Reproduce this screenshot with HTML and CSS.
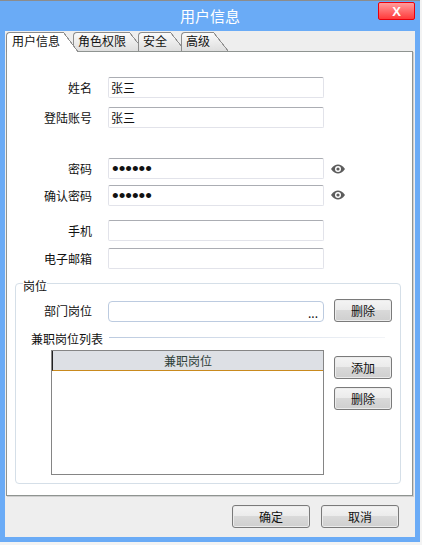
FILE: index.html
```html
<!DOCTYPE html>
<html lang="zh-CN">
<head>
    <meta charset="UTF-8">
    <meta name="viewport" content="width=device-width, initial-scale=1.0">
    <title>用户信息</title>
    <link rel="stylesheet" href="styles.css">
</head>
<body>
    <div class="window">
        <div class="titlebar">
            <span></span>
            <span class="title">用户信息</span>
            <button class="close">X</button>
        </div>

        <div class="client">
            <div class="tabs">
                <div class="tab first active">用户信息</div>
                <div class="tab">角色权限</div>
                <div class="tab tab-safe">安全</div>
                <div class="tab tab-high">高级</div>
            </div>

            <div class="pane">
                <div class="row">
                    <label>姓名</label>
                    <input type="text" value="张三">
                </div>
                <div class="row gap-9">
                    <label>登陆账号</label>
                    <input type="text" value="张三">
                </div>
                <div class="row gap-30">
                    <label>密码</label>
                    <input class="pwd" type="password" value="123456">
                    <svg class="eye" viewBox="0 0 14 10"><path d="M0 5C2.5 1.6 4.7 .5 7 .5S11.500 1.600 14 5C11.500 8.400 9.300 9.500 7 9.500S2.500 8.400 0 5Z" fill="#5c5c5c"/><circle cx="7" cy="5" r="3" fill="#fff"/><circle cx="7" cy="5" r="1.600" fill="#5c5c5c"/></svg>
                </div>
                <div class="row gap-6">
                    <label>确认密码</label>
                    <input class="pwd" type="password" value="123456">
                    <svg class="eye" viewBox="0 0 14 10"><path d="M0 5C2.5 1.6 4.7 .5 7 .5S11.500 1.600 14 5C11.500 8.400 9.300 9.500 7 9.500S2.500 8.400 0 5Z" fill="#5c5c5c"/><circle cx="7" cy="5" r="3" fill="#fff"/><circle cx="7" cy="5" r="1.600" fill="#5c5c5c"/></svg>
                </div>
                <div class="row gap-14">
                    <label>手机</label>
                    <input type="text">
                </div>
                <div class="row gap-7">
                    <label>电子邮箱</label>
                    <input type="text">
                </div>

                <fieldset class="group">
                    <legend>岗位</legend>

                    <div class="dept">
                        <label>部门岗位</label>
                        <div class="picker">...</div>
                        <button class="btn">删除</button>
                    </div>

                    <div class="subhead">
                        <span>兼职岗位列表</span>
                        <div class="rule"></div>
                    </div>

                    <div class="list-row">
                        <div class="list">
                            <div class="list-head">兼职岗位</div>
                        </div>
                        <div class="list-btns">
                            <button class="btn">添加</button>
                            <button class="btn">删除</button>
                        </div>
                    </div>
                </fieldset>
            </div>

            <div class="footer">
                <button class="btn wide">确定</button>
                <button class="btn wide">取消</button>
            </div>
        </div>
    </div>
</body>
</html>
```

FILE: styles.css
```css
* {
    box-sizing: border-box;
}
body {
    margin: 0;
    background: #f3f3f3;
    font-family: "Noto Sans CJK SC", "Liberation Sans", sans-serif;
    font-size: 12px;
    color: #111;
}
.window {
    width: 420px;
    height: 542px;
    border-top: 1px solid #8c8c8c;
    background: #6aabf6;
}
.titlebar {
    display: grid;
    grid-template-columns: 1fr auto 1fr;
    height: 30px;
}
.title {
    color: #fff;
    font-size: 15px;
    line-height: 30px;
    letter-spacing: 0;
}
.close {
    justify-self: end;
    width: 37px;
    height: 18px;
    margin: 1px 5px 0 0;
    padding: 0;
    border: 1px solid #e8000c;
    border-radius: 2px;
    background: linear-gradient(#ff9c9c, #ff3a3a);
    color: #fff;
    font: bold 13px/15px "Liberation Sans", sans-serif;
}

.client {
    width: 410px;
    height: 506px;
    margin-left: 5px;
    padding: 1px 0 0 1px;
    background: #eeeeee;
}

.tabs {
    display: flex;
    align-items: flex-start;
    height: 19px;
}
.tab {
    position: relative;
    height: 19px;
    margin-left: 10px;
    padding: 0 3px 0 4px;
    border-top: 1px solid #8c8c8c;
    border-left: 1px solid #8c8c8c;
    border-radius: 4px 0 0 0;
    background: linear-gradient(#fbfbfb, #dedede);
    line-height: 16px;
    white-space: nowrap;
}
.tab::before,
.tab::after {
    content: "";
    position: absolute;
    top: -1px;
    left: 100%;
    width: 15px;
    height: 19px;
}
.tab::before {
    background: linear-gradient(#fbfbfb, #dedede);
    clip-path: polygon(0 0, 100% 100%, 0 100%);
}
.tab::after {
    background: linear-gradient(to top right, transparent 48%, #8c8c8c 49%, #8c8c8c 52%, transparent 53%);
}
.tab.first {
    margin-left: 0;
    padding-left: 5px;
}
.tab.tab-safe {
    margin-left: 9px;
}
.tab.tab-high {
    margin-left: 11px;
}
.tab.active {
    z-index: 1;
    height: 20px;
    background: #fff;
}
.tab.active::before {
    height: 20px;
    background: #fff;
}
.tab.active::after {
    height: 20px;
}

.pane {
    width: 407px;
    height: 445px;
    padding-top: 25px;
    border: 1px solid #8f9491;
    background: #fff;
    box-shadow: 1px 1px 0 #cfcfcf;
}

.row {
    display: flex;
    align-items: center;
    height: 21px;
}
.row label {
    width: 85px;
    margin-right: 16px;
    padding-bottom: 1px;
    text-align: right;
}
.gap-6 {
    margin-top: 6px;
}
.gap-7 {
    margin-top: 7px;
}
.gap-9 {
    margin-top: 9px;
}
.gap-14 {
    margin-top: 14px;
}
.gap-30 {
    margin-top: 30px;
}
input {
    width: 216px;
    height: 21px;
    padding: 0 2px 1px;
    border: 1px solid #e2e3ea;
    border-top-color: #abadb3;
    border-radius: 2px;
    outline: 0;
    font-family: inherit;
    font-size: 12px;
    color: #111;
}
.pwd {
    padding: 0 3px;
    font-family: "Liberation Sans", sans-serif;
    font-size: 19px;
}
.eye {
    width: 14px;
    height: 10px;
    margin-left: 7px;
}
.gap-6 .eye {
    margin-bottom: 2px;
}

.group {
    width: 386px;
    height: 209px;
    margin: 6px 0 0 8px;
    padding: 7px 0 0;
    border: 1px solid #d5dfe8;
    border-radius: 4px;
    min-inline-size: 0;
}
.group legend {
    margin-left: 7px;
    padding: 5px 0 0;
    line-height: 12px;
}
.dept {
    display: flex;
    align-items: flex-end;
}
.dept label {
    align-self: center;
    width: 76px;
    margin-right: 16px;
    text-align: right;
}
.picker {
    width: 216px;
    height: 21px;
    margin-right: 10px;
    padding-right: 5px;
    border: 1px solid #bccbe0;
    border-radius: 4px;
    line-height: 21px;
    text-align: right;
}

.btn {
    width: 58px;
    height: 23px;
    padding: 0;
    border: 1px solid #7a7a7a;
    border-radius: 3px;
    background: linear-gradient(#f4f4f4, #ebebeb 48%, #d9d9d9 50%, #cfcfcf);
    box-shadow: inset 0 0 0 1px #ececec;
    font-family: inherit;
    font-size: 12px;
    color: #111;
}
.btn.wide {
    width: 78px;
}

.subhead {
    display: flex;
    align-items: center;
    height: 12px;
    margin-top: 10px;
    padding-left: 15px;
}
.rule {
    width: 276px;
    height: 1px;
    margin: 0 0 1px 6px;
    background: linear-gradient(to right, #bccbe0, #f2f4f7);
}

.list-row {
    display: flex;
    margin-top: 6px;
    padding-left: 35px;
}
.list {
    width: 273px;
    height: 125px;
    margin-right: 10px;
    border: 1px solid #858585;
    background: #fff;
}
.list-head {
    height: 20px;
    border-bottom: 1px solid #c98a1e;
    border-left: 1px solid #222;
    background: #dde0e5;
    color: #2f3f3a;
    line-height: 19px;
    text-align: center;
}
.list-btns {
    display: flex;
    flex-direction: column;
    gap: 8px;
    margin-top: 6px;
}

.footer {
    display: flex;
    justify-content: flex-end;
    gap: 11px;
    padding: 9px 16px 0 0;
}
```
